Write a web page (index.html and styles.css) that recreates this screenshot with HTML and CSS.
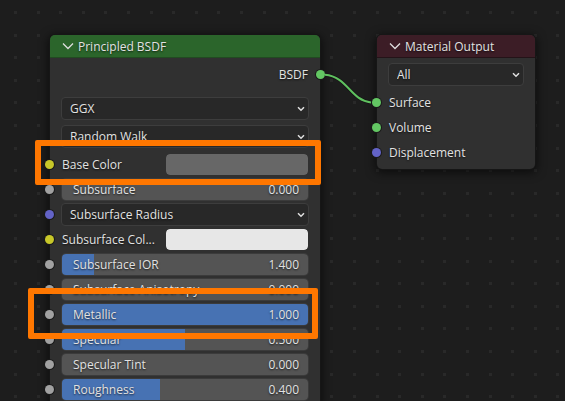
FILE: index.html
```html
<!DOCTYPE html>
<html lang="en">
<head>
<meta charset="utf-8">
<title>Shader Editor</title>
<link rel="stylesheet" href="styles.css">
</head>
<body>
<main class="canvas">
  <svg class="grid" aria-hidden="true">
    <defs>
      <pattern id="dots" x="14" y="11" width="113" height="113" patternUnits="userSpaceOnUse">
        <g id="dot-row" fill="#292929">
          <rect width="3" height="3"/><rect x="23" width="3" height="3"/><rect x="45" width="3" height="3"/><rect x="68" width="3" height="3"/><rect x="90" width="3" height="3"/>
        </g>
        <use href="#dot-row" y="23"/><use href="#dot-row" y="45"/><use href="#dot-row" y="68"/><use href="#dot-row" y="90"/>
      </pattern>
      <symbol id="chevron" viewBox="0 0 8 6"><path d="M1 1.2 4 4.2 7 1.2" fill="none" stroke="#e0e0e0" stroke-width="1.5"/></symbol>
      <symbol id="collapse" viewBox="0 0 12 8"><path d="M1 1.5 6 6.5 11 1.5" fill="none" stroke="#dedede" stroke-width="1.3"/></symbol>
    </defs>
    <rect width="100%" height="100%" fill="url(#dots)"/>
  </svg>

  <section class="node node-shader">
    <header class="head head-shader">
      <button class="toggle" type="button"><svg width="12" height="8"><use href="#collapse"/></svg>Principled BSDF</button>
    </header>
    <div class="body">
      <div class="row row-out">BSDF<i class="socket socket-out green"></i></div>
      <div class="menus">
        <div class="menu"><select aria-label="Distribution"><option>GGX</option></select><svg class="arrow" width="8" height="6"><use href="#chevron"/></svg></div>
        <div class="menu"><select aria-label="Subsurface Method"><option>Random Walk</option></select><svg class="arrow" width="8" height="6"><use href="#chevron"/></svg></div>
      </div>
      <div class="row row-color"><i class="socket yellow"></i><label for="base">Base Color</label><input id="base" class="swatch" type="color" value="#676767"></div>
      <div class="row"><i class="socket gray"></i><div class="slider"><input id="sub" type="range" min="0" max="1" step="0.001" value="0"><label for="sub">Subsurface</label><output for="sub">0.000</output></div></div>
      <div class="row"><i class="socket blue"></i><div class="menu"><select aria-label="Subsurface Radius"><option>Subsurface Radius</option></select><svg class="arrow" width="8" height="6"><use href="#chevron"/></svg></div></div>
      <div class="row row-color"><i class="socket yellow"></i><label for="subcol">Subsurface Col...</label><input id="subcol" class="swatch" type="color" value="#e7e7e7"></div>
      <div class="row"><i class="socket gray"></i><div class="slider"><input id="ior" type="range" min="1" max="4" step="0.001" value="1.4" style="--fill:13%"><label for="ior">Subsurface IOR</label><output for="ior">1.400</output></div></div>
      <div class="row"><i class="socket gray"></i><div class="slider"><input id="aniso" type="range" min="0" max="1" step="0.001" value="0"><label for="aniso">Subsurface Anisotropy</label><output for="aniso">0.000</output></div></div>
      <div class="row"><i class="socket gray"></i><div class="slider"><input id="metal" type="range" min="0" max="1" step="0.001" value="1" style="--fill:100%"><label for="metal">Metallic</label><output for="metal">1.000</output></div></div>
      <div class="row"><i class="socket gray"></i><div class="slider"><input id="spec" type="range" min="0" max="1" step="0.001" value="0.5" style="--fill:50%"><label for="spec">Specular</label><output for="spec">0.500</output></div></div>
      <div class="row"><i class="socket gray"></i><div class="slider"><input id="tint" type="range" min="0" max="1" step="0.001" value="0"><label for="tint">Specular Tint</label><output for="tint">0.000</output></div></div>
      <div class="row"><i class="socket gray"></i><div class="slider"><input id="rough" type="range" min="0" max="1" step="0.001" value="0.4" style="--fill:40%"><label for="rough">Roughness</label><output for="rough">0.400</output></div></div>
    </div>
  </section>

  <section class="node node-output">
    <header class="head head-output">
      <button class="toggle" type="button"><svg width="12" height="8"><use href="#collapse"/></svg>Material Output</button>
    </header>
    <div class="body body-output">
      <div class="menu"><select aria-label="Target"><option>All</option></select><svg class="arrow" width="8" height="6"><use href="#chevron"/></svg></div>
      <div class="rows">
        <div class="row"><i class="socket green"></i>Surface</div>
        <div class="row"><i class="socket green"></i>Volume</div>
        <div class="row"><i class="socket blue"></i>Displacement</div>
      </div>
    </div>
  </section>

  <svg class="wire" width="57" height="40" viewBox="0 0 57 40" aria-hidden="true">
    <path d="M5 4.8C28 7 30 30 51 32.4" fill="none" stroke="#151515" stroke-width="3.5"/>
    <path d="M5 4.8C28 7 30 30 51 32.4" fill="none" stroke="#5fc05f" stroke-width="2"/>
  </svg>

  <div class="mark mark-color"></div>
  <div class="mark mark-metal"></div>
</main>
</body>
</html>
```
FILE: styles.css
```css
* {
  box-sizing: border-box;
}

body {
  margin: 0;
  background: #1d1d1d;
  color: #e2e2e2;
  font: 12px/19px "Open Sans", "Noto Sans", sans-serif;
  text-shadow: 0 1px 2px #000000b0;
}

button,
select,
input {
  margin: 0;
  font: inherit;
  color: inherit;
  text-shadow: inherit;
}

.canvas {
  position: relative;
  height: 100vh;
  overflow: hidden;
}

.grid {
  position: absolute;
  inset: 0;
  width: 100%;
  height: 100%;
}

/* Nodes sit freely on the canvas */
.node {
  position: absolute;
  top: 35px;
  border-radius: 5px;
  background: #303030;
  box-shadow: 0 0 0 1px #161616, 0 2px 10px 2px #00000090;
}

.node-shader {
  left: 50px;
  width: 270px;
}

.node-output {
  left: 377px;
  width: 158px;
}

.head {
  display: flex;
  align-items: center;
  height: 23px;
  padding: 0 12px;
  border-radius: 5px 5px 0 0;
}

.head-shader {
  background: #2b652b;
  border-bottom: 1px solid #214b21;
}

.head-output {
  background: #3c1d26;
  border-bottom: 1px solid #241318;
}

.toggle {
  display: flex;
  align-items: center;
  gap: 4px;
  padding: 0;
  border: 0;
  background: none;
  white-space: nowrap;
}

.body {
  padding: 4px 12px;
}

.body-output {
  padding-top: 5px;
}

.rows {
  padding-top: 4px;
}

.row {
  position: relative;
  display: flex;
  align-items: center;
  height: 25px;
}

.row-out {
  justify-content: flex-end;
}

.row-color {
  display: grid;
  grid-template-columns: 104px 1fr;
}

.menus {
  display: grid;
  gap: 5px;
  padding: 10px 0 4px;
}

.menu {
  position: relative;
  flex: 1;
  height: 23px;
  margin: 0 -1px;
}

.menu select {
  display: block;
  width: 100%;
  height: 100%;
  padding: 0 8px;
  border: 1px solid #3d3d3d;
  border-radius: 4px;
  background: #282828;
  appearance: none;
}

.arrow {
  position: absolute;
  right: 4px;
  top: 9px;
  pointer-events: none;
}

.swatch {
  width: 100%;
  height: 21px;
  padding: 0;
  border: 0;
  border-radius: 4px;
  background: none;
  appearance: none;
  overflow: hidden;
}

.swatch::-webkit-color-swatch-wrapper {
  padding: 0;
}

.swatch::-webkit-color-swatch {
  border: 0;
  border-radius: 4px;
}

.slider {
  flex: 1;
  display: grid;
  grid-template-columns: 1fr auto;
  align-items: center;
  height: 21px;
  border-radius: 4px;
  box-shadow: 0 0 0 1px #3b3b3b;
}

.slider input {
  grid-area: 1 / 1 / 2 / 3;
  width: 100%;
  height: 21px;
  border-radius: 4px;
  background: linear-gradient(to right, #4772b3 var(--fill, 0%), #545454 var(--fill, 0%));
  appearance: none;
}

.slider input::-webkit-slider-thumb {
  width: 1px;
  height: 21px;
  appearance: none;
}

.slider label {
  grid-area: 1 / 1;
  z-index: 1;
  padding-left: 11px;
  pointer-events: none;
}

.slider output {
  grid-area: 1 / 2;
  z-index: 1;
  padding-right: 9px;
  pointer-events: none;
}

.socket {
  position: absolute;
  left: -17px;
  top: 8px;
  width: 9px;
  height: 9px;
  border-radius: 50%;
  box-shadow: 0 0 0 1px #1a1a1a;
}

.socket-out {
  left: auto;
  right: -17px;
}

.green {
  background: #63c763;
}

.yellow {
  background: #c7c729;
}

.gray {
  background: #a1a1a1;
}

.blue {
  background: #6363c7;
}

.wire {
  position: absolute;
  left: 320px;
  top: 70px;
  pointer-events: none;
}

/* Callout frames over the rows being discussed */
.mark {
  position: absolute;
  z-index: 2;
  border: 6px solid #ff7700;
  border-radius: 2px;
  pointer-events: none;
}

.mark-color {
  left: 35px;
  top: 140px;
  width: 286px;
  height: 45px;
}

.mark-metal {
  left: 28px;
  top: 288px;
  width: 290px;
  height: 51px;
}
```
